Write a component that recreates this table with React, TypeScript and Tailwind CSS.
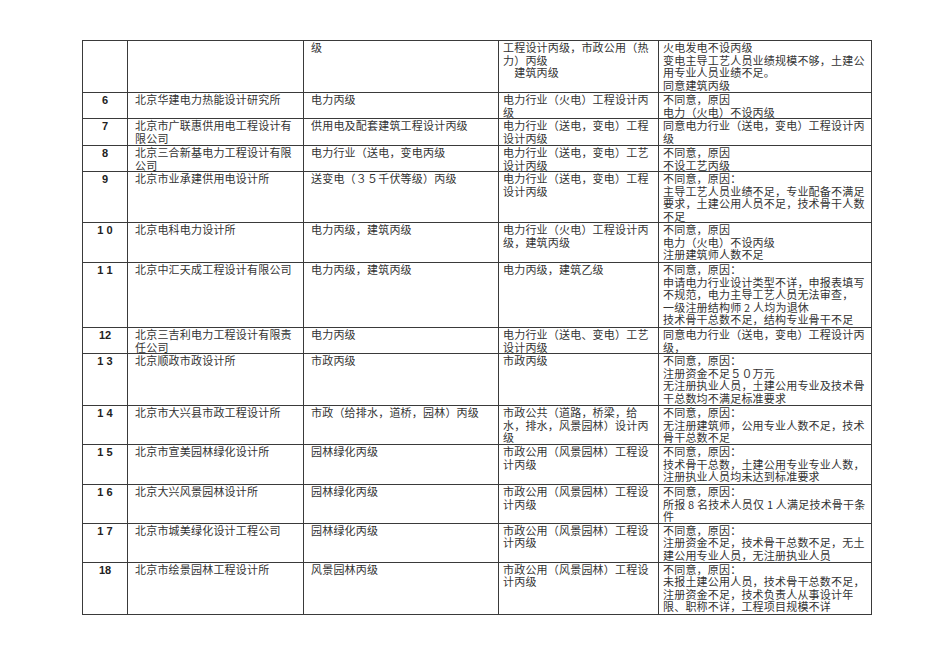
type Row = {
  no: string;
  h: string;
  name: string[];
  apply: string[];
  grant: string[];
  opinion: string[];
};

const rows: Row[] = [
  {
    no: "",
    h: "h-[52px]",
    name: [],
    apply: ["级"],
    grant: ["工程设计丙级，市政公用（热", "力）丙级", "\u3000建筑丙级"],
    opinion: ["火电发电不设丙级", "变电主导工艺人员业绩规模不够，土建公", "用专业人员业绩不足。", "同意建筑丙级"],
  },
  {
    no: "6",
    h: "h-[26px]",
    name: ["北京华建电力热能设计研究所"],
    apply: ["电力丙级"],
    grant: ["电力行业（火电）工程设计丙", "级"],
    opinion: ["不同意，原因", "电力（火电）不设丙级"],
  },
  {
    no: "7",
    h: "h-[27px]",
    name: ["北京市广联惠供用电工程设计有", "限公司"],
    apply: ["供用电及配套建筑工程设计丙级"],
    grant: ["电力行业（送电，变电）工程", "设计丙级"],
    opinion: ["同意电力行业（送电，变电）工程设计丙", "级"],
  },
  {
    no: "8",
    h: "h-[26px]",
    name: ["北京三合新基电力工程设计有限", "公司"],
    apply: ["电力行业（送电，变电丙级"],
    grant: ["电力行业（送电，变电）工艺", "设计丙级"],
    opinion: ["不同意，原因", "不设工艺丙级"],
  },
  {
    no: "9",
    h: "h-[51px]",
    name: ["北京市业承建供用电设计所"],
    apply: ["送变电（３５千伏等级）丙级"],
    grant: ["电力行业（送电，变电）工程", "设计丙级"],
    opinion: ["不同意，原因：", "主导工艺人员业绩不足，专业配备不满足", "要求，土建公用人员不足，技术骨干人数", "不足"],
  },
  {
    no: "1 0",
    h: "h-[40px]",
    name: ["北京电科电力设计所"],
    apply: ["电力丙级，建筑丙级"],
    grant: ["电力行业（火电）工程设计丙", "级，建筑丙级"],
    opinion: ["不同意，原因", "电力（火电）不设丙级", "注册建筑师人数不足"],
  },
  {
    no: "1 1",
    h: "h-[65px]",
    name: ["北京中汇天成工程设计有限公司"],
    apply: ["电力丙级，建筑丙级"],
    grant: ["电力丙级，建筑乙级"],
    opinion: [
      "不同意，原因：",
      "申请电力行业设计类型不详，申报表填写",
      "不规范，电力主导工艺人员无法审查，",
      "一级注册结构师 2 人均为退休",
      "技术骨干总数不足，结构专业骨干不足",
    ],
  },
  {
    no: "12",
    h: "h-[26px]",
    name: ["北京三吉利电力工程设计有限责", "任公司"],
    apply: ["电力丙级"],
    grant: ["电力行业（送电、变电）工艺", "设计丙级"],
    opinion: ["同意电力行业（送电，变电）工程设计丙", "级，"],
  },
  {
    no: "1 3",
    h: "h-[52px]",
    name: ["北京顺政市政设计所"],
    apply: ["市政丙级"],
    grant: ["市政丙级"],
    opinion: ["不同意，原因：", "注册资金不足５０万元", "无注册执业人员，土建公用专业及技术骨", "干总数均不满足标准要求"],
  },
  {
    no: "1 4",
    h: "h-[39px]",
    name: ["北京市大兴县市政工程设计所"],
    apply: ["市政（给排水，道桥，园林）丙级"],
    grant: ["市政公共（道路，桥梁，给", "水，排水，风景园林）设计丙", "级"],
    opinion: ["不同意，原因：", "无注册建筑师，公用专业人数不足，技术", "骨干总数不足"],
  },
  {
    no: "1 5",
    h: "h-[40px]",
    name: ["北京市宣美园林绿化设计所"],
    apply: ["园林绿化丙级"],
    grant: ["市政公用（风景园林）工程设", "计丙级"],
    opinion: ["不同意，原因：", "技术骨干总数，土建公用专业专业人数，", "注册执业人员均未达到标准要求"],
  },
  {
    no: "1 6",
    h: "h-[38px]",
    name: ["北京大兴风景园林设计所"],
    apply: ["园林绿化丙级"],
    grant: ["市政公用（风景园林）工程设", "计丙级"],
    opinion: ["不同意，原因：", "所报 8 名技术人员仅 1 人满足技术骨干条", "件"],
  },
  {
    no: "1 7",
    h: "h-[39px]",
    name: ["北京市城美绿化设计工程公司"],
    apply: ["园林绿化丙级"],
    grant: ["市政公用（风景园林）工程设", "计丙级"],
    opinion: ["不同意，原因：", "注册资金不足，技术骨干总数不足，无土", "建公用专业人员，无注册执业人员"],
  },
  {
    no: "18",
    h: "h-[52px]",
    name: ["北京市绘景园林工程设计所"],
    apply: ["风景园林丙级"],
    grant: ["市政公用（风景园林）工程设", "计丙级"],
    opinion: [
      "不同意，原因：",
      "未报土建公用人员，技术骨干总数不足，",
      "注册资金不足，技术负责人从事设计年",
      "限、职称不详，工程项目规模不详",
    ],
  },
];

function Lines({ lines }: { lines: string[] }) {
  return (
    <>
      {lines.map((l, i) => (
        <div key={i} className="whitespace-pre leading-[12.5px]">
          {l}
        </div>
      ))}
    </>
  );
}

export default function App() {
  return (
    <div className="min-h-screen bg-white pl-[82px] pt-[40px] font-['Noto_Sans_CJK_SC','Noto_Sans',sans-serif] text-[11px] tracking-[0.2px] text-[#333]">
      <table className="w-[789px] table-fixed border-collapse">
        <colgroup>
          <col className="w-[45px]" />
          <col className="w-[176px]" />
          <col className="w-[195px]" />
          <col className="w-[160px]" />
          <col className="w-[213px]" />
        </colgroup>
        <tbody>
          {rows.map((r, i) => (
            <tr key={i} className={r.h}>
              <td className="border border-[#3a3a3a] p-0 pt-px align-top text-center font-['Liberation_Sans',sans-serif] font-bold leading-[12.5px] tracking-normal whitespace-pre text-[#222]">
                {r.no}
              </td>
              <td className="border border-[#3a3a3a] p-0 pl-[7px] align-top">
                <Lines lines={r.name} />
              </td>
              <td className="border border-[#3a3a3a] p-0 pl-[7px] align-top">
                <Lines lines={r.apply} />
              </td>
              <td className="border border-[#3a3a3a] p-0 pl-[4px] align-top">
                <Lines lines={r.grant} />
              </td>
              <td className="border border-[#3a3a3a] p-0 pl-[4px] align-top">
                <Lines lines={r.opinion} />
              </td>
            </tr>
          ))}
        </tbody>
      </table>
    </div>
  );
}
